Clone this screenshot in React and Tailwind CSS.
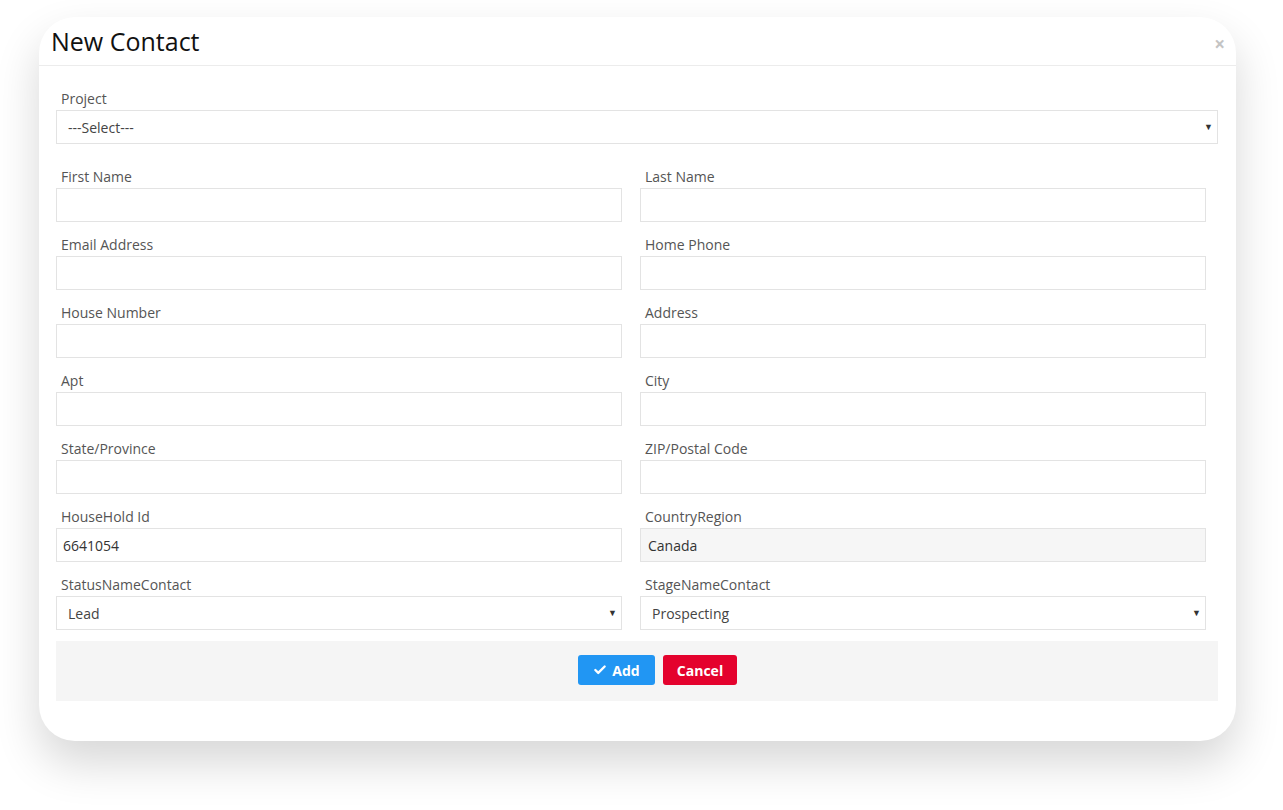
import React from 'react';
import { Check } from 'lucide-react';

const ROWS = [
  [{ label: 'First Name' }, { label: 'Last Name' }],
  [{ label: 'Email Address' }, { label: 'Home Phone' }],
  [{ label: 'House Number' }, { label: 'Address' }],
  [{ label: 'Apt' }, { label: 'City' }],
  [{ label: 'State/Province' }, { label: 'ZIP/Postal Code' }],
  [{ label: 'HouseHold Id', value: '6641054' }, { label: 'CountryRegion', value: 'Canada', disabled: true }],
  [{ label: 'StatusNameContact', value: 'Lead', select: true }, { label: 'StageNameContact', value: 'Prospecting', select: true }],
];

function Label({ children }) {
  return <div className="pl-[5px] h-5 leading-5 text-[14px] text-[#555]">{children}</div>;
}

function Field({ f }) {
  if (f.select) {
    return (
      <div className="mt-px h-[34px] border border-[#e3e3e3] bg-white flex items-center pl-[11px] pr-[4px] text-[14px] text-[#444]">
        <span className="flex-1">{f.value}</span>
        <span className="text-[9px] text-[#333]">▼</span>
      </div>
    );
  }
  return (
    <div className={`mt-px h-[34px] border border-[#e3e3e3] flex items-center pl-[6px] text-[14px] text-[#333] ${f.disabled ? 'bg-[#f6f6f6] pl-[7px]' : 'bg-white'}`}>
      {f.value}
    </div>
  );
}

export default function App() {
  return (
    <div className="w-[1283px] h-[810px] bg-white pt-[17px] pl-[39px]" style={{ fontFamily: '"Open Sans", "Liberation Sans", sans-serif' }}>
      <div className="w-[1197px] bg-white rounded-[36px] shadow-[0_22px_45px_rgba(0,0,0,0.16)] overflow-hidden">
        {/* Header */}
        <div className="h-[49px] border-b border-[#ececec] flex items-center pl-[12px] pr-[11px] pt-[1px]">
          <h1 className="flex-1 text-[25px] text-[#111] leading-none">New Contact</h1>
          <span className="text-[19px] font-bold text-[#c4c4c4] leading-none mt-[5px]">×</span>
        </div>

        <div className="pl-[17px] pr-[18px] pt-[23px] pb-[40px]">
          {/* Project */}
          <Label>Project</Label>
          <div className="mt-px h-[34px] border border-[#e3e3e3] flex items-center pl-[11px] pr-[4px] text-[14px] text-[#444]">
            <span className="flex-1">---Select---</span>
            <span className="text-[9px] text-[#333]">▼</span>
          </div>

          <div className="mt-[23px] grid grid-cols-[566px_566px] gap-x-[18px] gap-y-[13px]">
            {ROWS.flat().map((f) => (
              <div key={f.label}>
                <Label>{f.label}</Label>
                <Field f={f} />
              </div>
            ))}
          </div>

          {/* Footer */}
          <div className="mt-[11px] h-[60px] bg-[#f5f5f5] flex items-start justify-center gap-2 pt-[14px] pl-[41px]">
            <button className="w-[77px] h-[30px] rounded-[3px] bg-[#2196f3] text-white text-[14px] font-bold flex items-center justify-center gap-[5px]">
              <Check className="w-[14px] h-[14px]" strokeWidth={4} />
              Add
            </button>
            <button className="w-[74px] h-[30px] rounded-[3px] bg-[#e4022d] text-white text-[14px] font-bold">
              Cancel
            </button>
          </div>
        </div>
      </div>
    </div>
  );
}
